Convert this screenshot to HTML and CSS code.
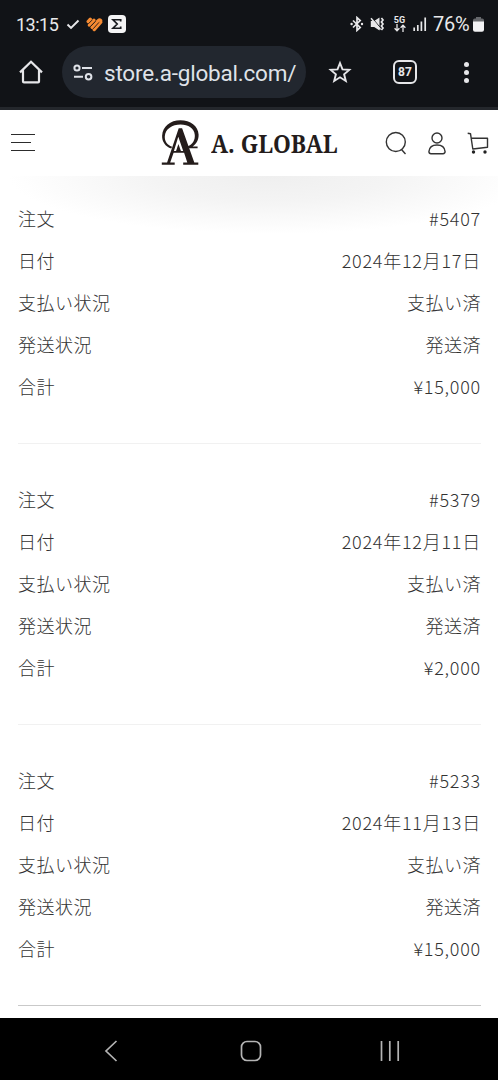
FILE: index.html
```html
<!DOCTYPE html>
<html lang="ja">
<head>
<meta charset="utf-8">
<title>A. GLOBAL</title>
<link rel="stylesheet" href="styles.css">
</head>
<body>
<div class="phone">
  <div class="chrome">
    <div class="status">
      <span class="time">13:15</span>
      <svg class="st-check" width="14" height="14" viewBox="0 0 14 14"><path d="M1.500 7.500 5 11 12.500 3.500" fill="none" stroke="#e8e8ea" stroke-width="1.900"/></svg>
      <svg class="st-heart" width="17" height="15" viewBox="0 0 17 15"><g fill="none" stroke="#f58a32" stroke-width="3.200" stroke-linecap="round"><path d="M2.100 4.600 4.300 2.200"/><path d="M3.300 8 8 3.200"/><path d="M6 10.300 12.200 3.600Q14 2 14.800 3.500"/><path d="M8.200 12.600 14.800 5.200"/></g><path d="M2.500 6.700 6 3.200M4.600 9.500 9.600 4.300M7.200 11.800 13 5.400" stroke="#111317" stroke-width=".8"/></svg>
      <svg class="st-sigma" width="18" height="18" viewBox="0 0 19 19"><rect width="19" height="19" rx="4" fill="#f4f4f5"/><path d="M13.400 6.800V5H5.300l4.400 4.500L5.300 14h8.100v-1.900" fill="none" stroke="#17191d" stroke-width="1.800"/></svg>
      <span class="grow"></span>
      <svg class="st-bt" width="14" height="16" viewBox="0 0 14 16"><path d="m3 4.500 7.200 7L7 14.400V1.600l3.200 2.900L3 11.500" fill="none" stroke="#e8e8ea" stroke-width="1.700"/><circle cx="1.600" cy="8" r="1.200" fill="#e8e8ea"/><circle cx="12" cy="8" r="1.200" fill="#e8e8ea"/></svg>
      <svg class="st-mute" width="15" height="16" viewBox="0 0 15 16"><path d="M.8 5h3.400L9.500 1.500v13L4.200 11H.8z" fill="#e8e8ea"/><path d="M2.300 2.200 10.500 11.800" stroke="#111317" stroke-width="1"/><path d="m1 2.200 9.500 11.300" stroke="#e8e8ea" stroke-width="1.500"/><path d="m11.400 2 1.600 2-1.600 2L13 8l-1.600 2 1.600 2-1.600 2" fill="none" stroke="#e8e8ea" stroke-width="1.700"/></svg>
      <span class="net"><b>5G</b><svg width="12" height="8" viewBox="0 0 12 8"><path d="M3 0v6.600M.6 4.200 3 6.800l2.400-2.600M9 8V1.200M6.600 3.800 9 1.200l2.400 2.600" fill="none" stroke="#e8e8ea" stroke-width="1.300"/></svg></span>
      <svg class="st-signal" width="14" height="14" viewBox="0 0 14 14"><path d="M1.200 10.500V14M4.800 8v6M8.400 4.500V14M12.200.5V14" stroke="#e8e8ea" stroke-width="1.700"/></svg>
      <span class="pct">76%</span>
      <svg class="st-batt" width="11" height="15" viewBox="0 0 11 15"><path d="M3 0h5v1.500h1.200A1.800 1.800 0 0 1 11 3.300V5H0V3.300a1.800 1.800 0 0 1 1.800-1.800H3z" fill="#66686c"/><path d="M0 4.500h11v8.300a2 2 0 0 1-2 2H2a2 2 0 0 1-2-2z" fill="#f2f2f4"/></svg>
    </div>
    <div class="toolbar">
      <svg class="home" width="26" height="26" viewBox="0 0 26 26"><path d="M2 13.400 13 2.800l11 10.600M5 11.200v11.200q0 1 1 1h14q1 0 1-1V11.200" fill="none" stroke="#e6e6e9" stroke-width="2.200"/></svg>
      <div class="omnibox">
        <svg width="20" height="17" viewBox="0 0 20 17"><g fill="none" stroke="#dfe2e8" stroke-width="2"><circle cx="4" cy="4" r="2.600"/><path d="M9 4h10M1 12.700h9"/><circle cx="15.600" cy="12.700" r="2.800"/></g></svg>
        <span class="url">store.a-global.com/</span>
      </div>
      <svg class="star" width="24" height="24" viewBox="0 0 24 24"><path d="m12 3 2.500 6.400 6.800.5-5.200 4.400 1.700 6.700L12 17.300 6.200 21l1.700-6.700L2.700 9.900l6.800-.5z" fill="none" stroke="#e6e6e9" stroke-width="1.900"/></svg>
      <span class="tabs">87</span>
      <span class="dots"><i></i><i></i><i></i></span>
    </div>
  </div>

  <header class="site">
    <svg class="burger" width="25" height="20" viewBox="0 0 25 20"><path d="M0 1.500h24M0 9.500h20M0 17.500h24" stroke="#2c2c2c" stroke-width="1.200"/></svg>
    <div class="brand">
      <svg width="40" height="47" viewBox="0 0 40 47"><g fill="#241c1b"><path d="M10.300 28.600C4.300 26.600.9 21.400 1.100 15.700 1.600 6.500 9.500.3 19.300.3 29.500.3 37.200 6 37.600 14.500c.2 5.300-2.200 9.700-6 11.900h5v1.900h-9.100l-.6-2.100c4.600-1.700 7.300-6.300 6.900-11.300C33.300 8.400 27.300 4.500 19.500 4.500 11.300 4.500 4.300 9 3.800 16.200c-.3 4.800 2.300 8.800 7.300 10.600z"/><path fill-rule="evenodd" d="M17.700 8.200h3.400l12.200 34.300h4v2.200H22.200v-2.200h4.100l-3.200-9.700H12.600L9.200 42.500h4.500v2.200H.8v-2.200h5.300zM17.300 16.800 12.900 31h9.300z"/><path d="m17.400 24 2.700 7.500h-5.200z"/></g></svg>
      <span>A. GLOBAL</span>
    </div>
    <div class="actions">
      <svg width="22" height="24" viewBox="0 0 22 24"><g fill="none" stroke="#333" stroke-width="1.400"><circle cx="10.800" cy="11" r="9.500"/><path d="m16.500 18.500 4 4.500"/></g></svg>
      <svg width="18" height="23" viewBox="0 0 18 23"><g fill="none" stroke="#333" stroke-width="1.400"><circle cx="9" cy="6" r="5"/><path d="M3 21.700Q.9 21.700.9 19.600C1.300 15.500 4.500 13 9 13s7.700 2.500 8.100 6.600q0 2.100-2.100 2.100z"/></g></svg>
      <svg width="22" height="22" viewBox="0 0 22 22"><path d="M.7 1.200 3.500 1.700 5.800 17 20.500 15.200V6.200H4.300" fill="none" stroke="#333" stroke-width="1.400" stroke-linejoin="round"/><circle cx="6.500" cy="20" r="1.700" fill="#222"/><circle cx="18" cy="20" r="1.700" fill="#222"/></svg>
    </div>
  </header>

  <main class="orders">
    <dl class="order">
      <div><dt>注文</dt><dd class="num">#5407</dd></div>
      <div><dt>日付</dt><dd class="num">2024年12月17日</dd></div>
      <div><dt>支払い状況</dt><dd>支払い済</dd></div>
      <div><dt>発送状況</dt><dd>発送済</dd></div>
      <div><dt>合計</dt><dd class="num">¥15,000</dd></div>
    </dl>
    <dl class="order">
      <div><dt>注文</dt><dd class="num">#5379</dd></div>
      <div><dt>日付</dt><dd class="num">2024年12月11日</dd></div>
      <div><dt>支払い状況</dt><dd>支払い済</dd></div>
      <div><dt>発送状況</dt><dd>発送済</dd></div>
      <div><dt>合計</dt><dd class="num">¥2,000</dd></div>
    </dl>
    <dl class="order">
      <div><dt>注文</dt><dd class="num">#5233</dd></div>
      <div><dt>日付</dt><dd class="num">2024年11月13日</dd></div>
      <div><dt>支払い状況</dt><dd>支払い済</dd></div>
      <div><dt>発送状況</dt><dd>発送済</dd></div>
      <div><dt>合計</dt><dd class="num">¥15,000</dd></div>
    </dl>
  </main>

  <nav class="sysnav">
    <svg width="14" height="22" viewBox="0 0 14 22"><path d="M12.500 1 2 11l10.500 10" fill="none" stroke="#b4b4b4" stroke-width="1.700"/></svg>
    <svg width="22" height="22" viewBox="0 0 22 22"><rect x="1.500" y="1.500" width="19" height="19" rx="5.500" fill="none" stroke="#b4b4b4" stroke-width="1.700"/></svg>
    <svg width="20" height="20" viewBox="0 0 20 20"><path d="M1.500 0v20M9.800 0v20M18.200 0v20" stroke="#b4b4b4" stroke-width="1.700"/></svg>
  </nav>
</div>
</body>
</html>
```

FILE: styles.css
```css
* { box-sizing: border-box; }
body { margin: 0; background: #fff; }
svg { display: block; flex: none; }
.phone {
  width: 498px;
  height: 1080px;
  display: flex;
  flex-direction: column;
  overflow: hidden;
}
.chrome {
  flex: none;
  height: 110px;
  background: #111317;
  border-bottom: 3px solid #24272c;
  font-family: Roboto, "Liberation Sans", sans-serif;
  color: #e8e8ea;
}
.status {
  height: 46px;
  display: flex;
  align-items: center;
  padding: 2px 14px 0 16px;
}
.time { font-size: 18px; width: 50px; white-space: nowrap; letter-spacing: -.5px; }
.st-heart { margin-left: 6px; }
.st-sigma { margin-left: 5px; }
.grow { flex: 1; }
.st-mute { margin-left: 6px; }
.net { display: flex; flex-direction: column; align-items: center; margin-left: 8px; width: 13px; }
.net b { font-size: 9px; line-height: 8px; font-weight: 700; }
.st-signal { margin-left: 7px; }
.pct { font-size: 20px; margin-left: 6px; width: 37px; letter-spacing: -.3px; }
.st-batt { margin-left: 3px; }
.toolbar {
  height: 52px;
  display: flex;
  align-items: center;
  padding-left: 18px;
}
.omnibox {
  display: flex;
  align-items: center;
  width: 244px;
  height: 52px;
  margin-left: 18px;
  padding-left: 11px;
  border-radius: 26px;
  background: #22272f;
}
.url {
  margin-left: 11px;
  padding-top: 1px;
  white-space: nowrap;
  font-size: 22.500px;
  line-height: 32px;
  letter-spacing: -.2px;
  color: #dfe2e8;
}
.star { margin-left: 22px; }
.tabs {
  display: flex;
  align-items: center;
  justify-content: center;
  width: 24px;
  height: 24px;
  margin-left: 41px;
  border: 2px solid #e6e6e9;
  border-radius: 6px;
  font-size: 12px;
  font-weight: 700;
}
.dots { display: flex; flex-direction: column; gap: 3px; margin-left: 47px; }
.dots i { width: 5px; height: 5px; border-radius: 50%; background: #e6e6e9; }
.site {
  flex: none;
  height: 66px;
  display: flex;
  align-items: center;
  justify-content: space-between;
  padding: 0 9px 0 11px;
  background: #fff;
}
.brand {
  display: flex;
  align-items: center;
  gap: 10px;
  width: 178px;
  margin-left: 78px;
  font: 700 25px "Noto Serif", "Liberation Serif", serif;
  white-space: nowrap;
  color: #241c1b;
}
.brand span { transform: scaleX(.908); transform-origin: left; }
.actions { display: flex; align-items: center; gap: 21px; }
.orders {
  flex: 1;
  min-height: 0;
  padding: 21px 17px 0 18px;
  background: radial-gradient(ellipse 260px 58px at 54% 0, #efefef 0%, #f4f4f4 45%, #fff 100%) no-repeat;
}
.order {
  margin: 0 0 34px;
  height: 247px;
  border-bottom: 1px solid #f1f1f1;
  font: 300 18px "Noto Sans CJK JP", sans-serif;
  letter-spacing: .5px;
  color: #333;
}
.order:last-child { border-bottom-color: #c9c9c9; }
.order div {
  display: flex;
  justify-content: space-between;
  align-items: center;
  height: 42px;
}
.order dd { margin: 0; }
.order .num { letter-spacing: .75px; }
.sysnav {
  flex: none;
  height: 62px;
  display: flex;
  align-items: center;
  justify-content: space-between;
  padding: 3px 98px 0 104px;
  background: #000;
}
.sysnav svg:nth-child(2) { margin-left: 3px; }
```
